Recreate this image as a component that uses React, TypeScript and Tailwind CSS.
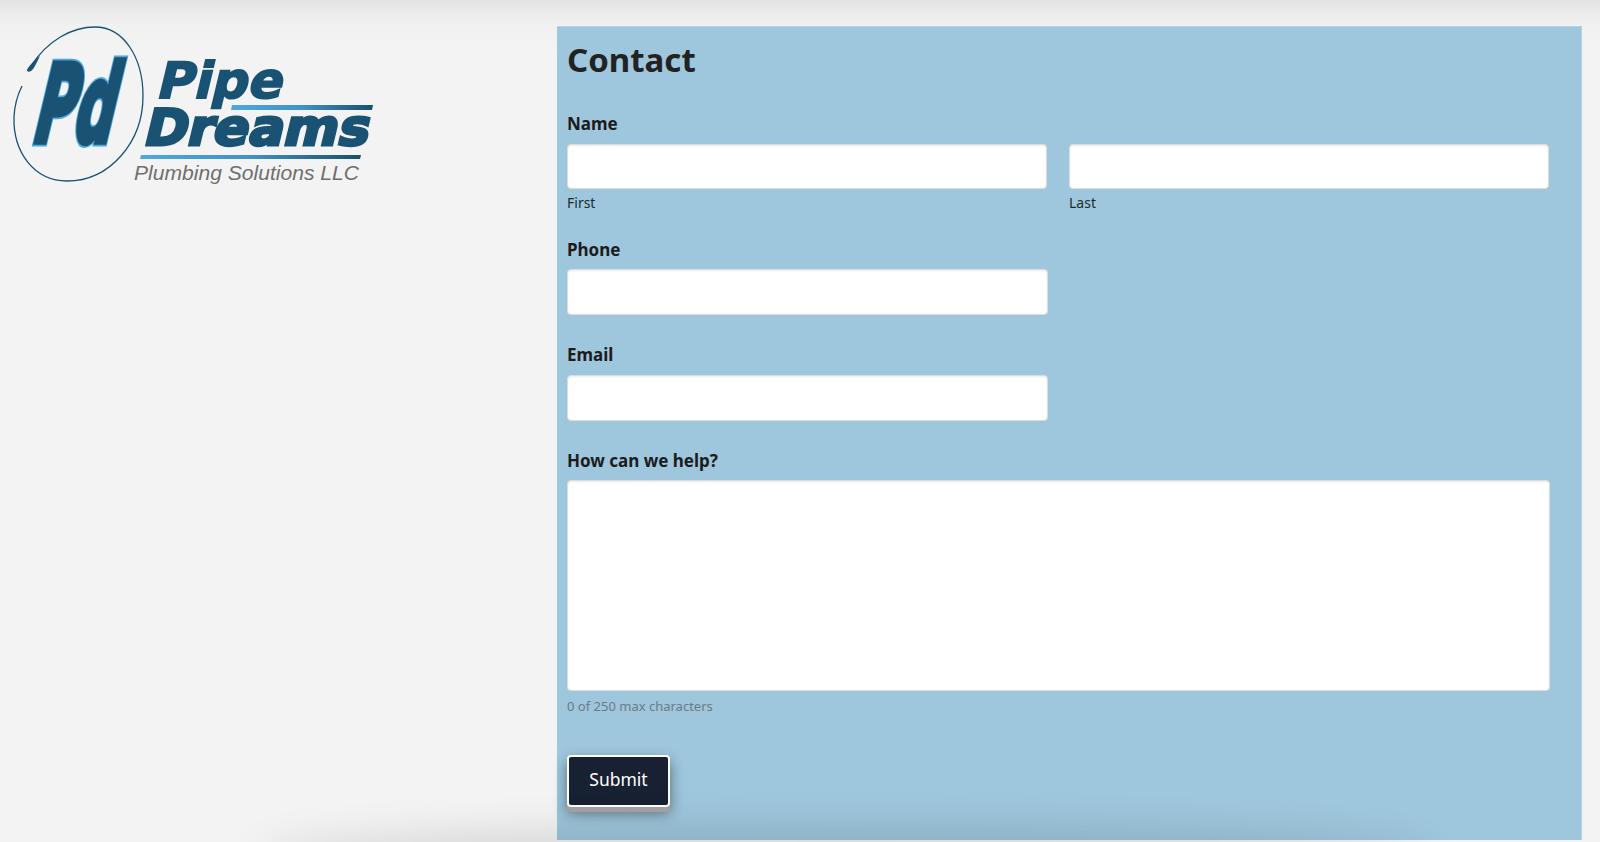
const labelClass = 'block text-[17px] leading-[20px] font-bold text-[#1c1c1c]';
const inputClass =
  'block bg-white border border-[#dcdcdc] rounded-[4px] shadow-[inset_0_1px_2px_rgba(0,0,0,0.08)]';

function Logo() {
  return (
    <svg width="400" height="200" viewBox="0 0 400 200" className="block">
      <defs>
        <linearGradient id="bar" x1="0" x2="1" y1="0" y2="0">
          <stop offset="0" stopColor="#4ea8de" />
          <stop offset="0.5" stopColor="#3f93c4" />
          <stop offset="1" stopColor="#1a4f6e" />
        </linearGradient>
      </defs>
      <path
        d="M31 66 C48 40 72 27 95 27 C124 27 143 58 143 96 C143 142 110 181 67 181 C34 181 13 152 14 117 C14.500 106 17 96 22 86"
        fill="none"
        stroke="#1a5273"
        strokeWidth="1.300"
      />
      <path d="M27 70 C29 65 36 59 40 56 C37 62 34 69 31 71 C29 72 27 72 27 70 Z" fill="#1a5273" />
      <g fontFamily="'DejaVu Sans', sans-serif" fontWeight="700" fill="#1a5273" strokeLinejoin="miter">
        <text
          transform="matrix(1 0 -0.24 1 30 142)"
          fontSize="108"
          textLength="80"
          lengthAdjust="spacingAndGlyphs"
          stroke="#4ea8de"
          strokeWidth="9"
        >
          Pd
        </text>
        <text
          transform="matrix(1 0 -0.24 1 30 142)"
          fontSize="108"
          textLength="80"
          lengthAdjust="spacingAndGlyphs"
          stroke="#1a5273"
          strokeWidth="5.500"
        >
          Pd
        </text>
        <text
          transform="matrix(1 0 -0.24 1 155 98)"
          fontSize="50"
          textLength="126"
          lengthAdjust="spacingAndGlyphs"
          stroke="#1a5273"
          strokeWidth="1.800"
        >
          Pipe
        </text>
        <text
          transform="matrix(1 0 -0.24 1 142 145)"
          fontSize="50"
          textLength="225"
          lengthAdjust="spacingAndGlyphs"
          stroke="#1a5273"
          strokeWidth="3"
        >
          Dreams
        </text>
      </g>
      <polygon points="232,105 373,105 372,110 231,110" fill="url(#bar)" />
      <polygon points="141,155 361,155 360,159 140,159" fill="url(#bar)" />
      <text
        x="134"
        y="180"
        fontFamily="'Liberation Sans', sans-serif"
        fontStyle="italic"
        fontSize="20.500"
        fill="#6f6f6f"
        textLength="225"
        lengthAdjust="spacingAndGlyphs"
      >
        Plumbing Solutions LLC
      </text>
    </svg>
  );
}

export default function App() {
  return (
    <div
      className="relative h-[842px] overflow-hidden flex pt-[26px] bg-[linear-gradient(to_bottom,#e2e2e2_0px,#ececec_14px,#f1f1f1_26px,#f3f3f3_50px)] font-['Noto_Sans','Open_Sans',sans-serif]"
    >
      <div className="w-[557px] shrink-0 -mt-[26px]">
        <Logo />
      </div>

      <div className="w-[1025px] h-[814px] bg-[#9ec6dc] border-r border-t border-[#b4d4e6] pl-[10px] pt-[13px]">
        <h1 className="text-[33px] leading-[40px] font-bold text-[#222222]">Contact</h1>

        <label className={`${labelClass} mt-[34px]`}>Name</label>
        <div className="flex gap-[22px] mt-[10px]">
          <div className="w-[480px]">
            <div className={`${inputClass} h-[45px]`} />
            <span className="block mt-[5px] text-[14px] leading-[18px] text-[#1f2a30]">First</span>
          </div>
          <div className="w-[480px]">
            <div className={`${inputClass} h-[45px]`} />
            <span className="block mt-[5px] text-[14px] leading-[18px] text-[#1f2a30]">Last</span>
          </div>
        </div>

        <label className={`${labelClass} mt-[28px]`}>Phone</label>
        <div className={`${inputClass} h-[46px] w-[481px] mt-[9px]`} />

        <label className={`${labelClass} mt-[30px]`}>Email</label>
        <div className={`${inputClass} h-[46px] w-[481px] mt-[10px]`} />

        <label className={`${labelClass} mt-[30px]`}>How can we help?</label>
        <div className={`${inputClass} h-[211px] w-[983px] mt-[9px]`} />
        <p className="mt-[7px] text-[13px] leading-[16px] text-[#6b7b84]">0 of 250 max characters</p>

        <button className="block mt-[41px] w-[103px] h-[52px] pb-[3px] bg-[#172132] border-2 border-white rounded-[4px] text-[17.500px] font-normal text-white shadow-[0_5px_0_#a3a3a3,0_6px_14px_rgba(0,0,0,0.45)]">
          Submit
        </button>
      </div>

      <div className="pointer-events-none absolute left-[270px] w-[1150px] -bottom-[30px] h-[30px] rounded-[50%] shadow-[0_0_40px_14px_rgba(0,0,0,0.12)]" />
    </div>
  );
}
